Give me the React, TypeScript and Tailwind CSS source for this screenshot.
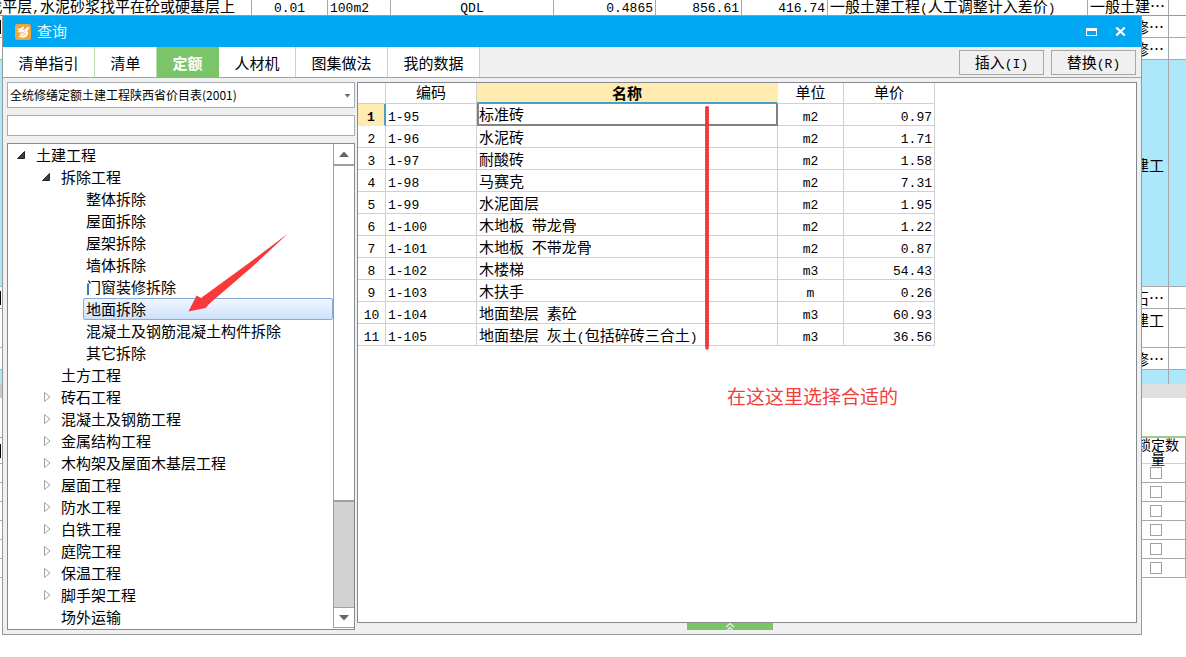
import { useState } from 'react';

const treeItems = [
  { label: '土建工程', level: 0, state: 'open' },
  { label: '拆除工程', level: 1, state: 'open' },
  { label: '整体拆除', level: 2, state: 'leaf' },
  { label: '屋面拆除', level: 2, state: 'leaf' },
  { label: '屋架拆除', level: 2, state: 'leaf' },
  { label: '墙体拆除', level: 2, state: 'leaf' },
  { label: '门窗装修拆除', level: 2, state: 'leaf' },
  { label: '地面拆除', level: 2, state: 'leaf' },
  { label: '混凝土及钢筋混凝土构件拆除', level: 2, state: 'leaf' },
  { label: '其它拆除', level: 2, state: 'leaf' },
  { label: '土方工程', level: 1, state: 'leaf' },
  { label: '砖石工程', level: 1, state: 'closed' },
  { label: '混凝土及钢筋工程', level: 1, state: 'closed' },
  { label: '金属结构工程', level: 1, state: 'closed' },
  { label: '木构架及屋面木基层工程', level: 1, state: 'closed' },
  { label: '屋面工程', level: 1, state: 'closed' },
  { label: '防水工程', level: 1, state: 'closed' },
  { label: '白铁工程', level: 1, state: 'closed' },
  { label: '庭院工程', level: 1, state: 'closed' },
  { label: '保温工程', level: 1, state: 'closed' },
  { label: '脚手架工程', level: 1, state: 'closed' },
  { label: '场外运输', level: 1, state: 'leaf' },
];

const rows = [
  { code: '1-95', name: '标准砖', unit: 'm2', price: '0.97' },
  { code: '1-96', name: '水泥砖', unit: 'm2', price: '1.71' },
  { code: '1-97', name: '耐酸砖', unit: 'm2', price: '1.58' },
  { code: '1-98', name: '马赛克', unit: 'm2', price: '7.31' },
  { code: '1-99', name: '水泥面层', unit: 'm2', price: '1.95' },
  { code: '1-100', name: '木地板 带龙骨', unit: 'm2', price: '1.22' },
  { code: '1-101', name: '木地板 不带龙骨', unit: 'm2', price: '0.87' },
  { code: '1-102', name: '木楼梯', unit: 'm3', price: '54.43' },
  { code: '1-103', name: '木扶手', unit: 'm', price: '0.26' },
  { code: '1-104', name: '地面垫层 素砼', unit: 'm3', price: '60.93' },
  { code: '1-105', name: '地面垫层 灰土(包括碎砖三合土)', unit: 'm3', price: '36.56' },
];

const tabs = [
  { label: '清单指引', width: 'w-[92px]' },
  { label: '清单', width: 'w-[62px]' },
  { label: '定额', width: 'w-[62px]' },
  { label: '人材机', width: 'w-[77px]' },
  { label: '图集做法', width: 'w-[92px]' },
  { label: '我的数据', width: 'w-[92px]' },
];

const indents = ['pl-[7px]', 'pl-8', 'pl-[57px]'];

// latin runs are set in the mono face, a bit smaller than the chinese text
function Mixed({ text }: { text: string }) {
  return (
    <>
      {text.split(/([\x20-\x7e]+)/).map((part, i) =>
        i % 2 ? (
          <span key={i} className="font-['Liberation_Mono',monospace] text-[13px] leading-none whitespace-pre">{part}</span>
        ) : (
          part
        )
      )}
    </>
  );
}

function Twisty({ state }: { state: string }) {
  return (
    <svg width="12" height="12" viewBox="0 0 12 12" className="shrink-0">
      {state === 'open' && <path d="M9.5 2.5v7h-7z" fill="#404040" stroke="#262626" />}
      {state === 'closed' && <path d="M4.5 1.5v9l5.500-4.500z" fill="#fff" stroke="#a0a0a0" />}
    </svg>
  );
}

function SheetTop() {
  const cell = 'flex items-end overflow-hidden shrink-0 border-r border-[#a8a8a8] px-0.5';
  return (
    <div className="flex h-4 border-b border-[#9a9a9a] overflow-hidden leading-[18px] whitespace-nowrap">
      <div className={`${cell} w-[252px] justify-end`}>
        <span className="pr-3.5"><Mixed text="找平层,水泥砂浆找平在砼或硬基层上" /></span>
      </div>
      <div className={`${cell} w-[76px] justify-center`}><span><Mixed text="0.01" /></span></div>
      <div className={`${cell} w-[63px]`}><span><Mixed text="100m2" /></span></div>
      <div className={`${cell} w-[163px] justify-center`}><span><Mixed text="QDL" /></span></div>
      <div className={`${cell} w-[102px] justify-end`}><span><Mixed text="0.4865" /></span></div>
      <div className={`${cell} w-[86px] justify-end`}><span><Mixed text="856.61" /></span></div>
      <div className={`${cell} w-[86px] justify-end`}><span><Mixed text="416.74" /></span></div>
      <div className={`${cell} w-[260px]`}><span><Mixed text="一般土建工程(人工调整计入差价)" /></span></div>
      <div className={`${cell} w-[81px]`}>一般土建…</div>
    </div>
  );
}

function SheetLeft() {
  return (
    <div className="w-0.5 shrink-0 overflow-hidden">
      <div className="flex h-[22px] items-center border-b border-[#a8a8a8]"><i className="h-3.5 w-px bg-black" /></div>
      <div className="h-[22px] border-b border-[#a8a8a8]" />
      <div className="h-[227px] border-b border-[#a8a8a8] bg-[#ace8fa]" />
      <div className="flex h-[22px] items-center border-b border-[#a8a8a8]"><i className="h-3.5 w-px bg-black" /></div>
      <div className="h-[39px] border-b border-[#a8a8a8]" />
      <div className="h-[22px] border-b border-[#a8a8a8]" />
      <div className="h-3.5 bg-[#ace8fa]" />
      <div className="h-3.5 bg-[#c8c8c8]" />
      <div className="h-10 border-b border-[#8db583]" />
      <div className="flex h-[26px] items-center border-b border-[#a8a8a8]"><i className="h-3.5 w-px bg-black" /></div>
      {[1, 2, 3, 4, 5, 6].map(n => (
        <div key={n} className="h-[19px] border-b border-[#a8a8a8]" />
      ))}
    </div>
  );
}

function SheetRight() {
  const row = 'flex border-b border-[#a8a8a8]';
  const cell = 'flex w-[27px] shrink-0 items-center justify-end overflow-hidden border-r border-[#a8a8a8] pr-1 whitespace-nowrap';
  return (
    <div className="w-11 shrink-0">
      <div className={`${row} h-[22px]`}><div className={cell}>修…</div></div>
      <div className={`${row} h-[22px]`}><div className={cell}>修…</div></div>
      <div className={`${row} h-[227px] bg-[#ace8fa]`}>
        <div className={`${cell} pb-4`}>建工</div>
      </div>
      <div className={`${row} h-[22px]`}><div className={cell}>石…</div></div>
      <div className={`${row} h-[39px]`}>
        <div className={`${cell} pb-4`}>建工</div>
      </div>
      <div className={`${row} h-[22px]`}><div className={cell}>修…</div></div>
      <div className="flex h-3.5 bg-[#ace8fa]"><div className={cell} /></div>
      <div className="h-3.5 bg-[#e0e0e0]" />
      <div className="h-10 border-b-2 border-[#9ccb8c]" />
      <div className="border-r border-[#a8a8a8]">
        <div className="flex h-[26px] items-center justify-end overflow-x-clip border-b border-[#d0d0d0] pr-1.5">
          <div className="w-[42px] shrink-0 text-center text-[14px] leading-[14px]">锁定数量</div>
        </div>
        {[1, 2, 3, 4, 5, 6].map(n => (
          <div key={n} className="flex h-[19px] items-center border-b border-[#a8a8a8] pl-2">
            <input type="checkbox" aria-label={`锁定数量 ${n}`} className="size-3 appearance-none border border-[#a0a0a0] bg-white" />
          </div>
        ))}
      </div>
    </div>
  );
}

function TitleBar() {
  return (
    <header className="flex h-[31px] items-center bg-[#00a8f3] pr-1.5 pl-3">
      <svg width="16" height="16" viewBox="0 0 16 16">
        <rect width="16" height="16" rx="2.5" fill="#f2a53c" />
        <path d="M2 4.500C4 5 6.500 4.500 8.500 2C9.500 4 8.500 5.500 7 6.300L10 5.500L13 2.500L14 4.500L12 7C14 8.500 13.500 11 11 12.800C8.500 14.300 5 13.800 3.500 12L6 11.800L4.500 10.500L8.500 7.800C6 8.800 4 8.800 2.500 7.800L4.500 6.800C3.500 6.300 2.500 5.500 2 4.500z" fill="#fff" />
        <path d="M6.500 10.500L10.500 7.200M7.500 12L11 9.500" stroke="#f2a53c" strokeWidth="0.900" />
      </svg>
      <h1 className="ml-1.5 flex-1 pb-0.5 text-[15px] text-[#e8faff]">查询</h1>
      <button aria-label="最大化" className="flex h-6 w-[29px] items-center justify-center">
        <svg width="11" height="8" viewBox="0 0 11 8">
          <path d="M0 0h11v8H0z M1 3v4h9V3z" fill="#fff" fillRule="evenodd" />
        </svg>
      </button>
      <button aria-label="关闭" className="flex h-6 w-[29px] items-center justify-center">
        <svg width="11" height="9" viewBox="0 0 11 9">
          <path d="M1.200 0.500l8.600 8M9.800 0.500l-8.600 8" stroke="#fff" strokeWidth="2.200" />
        </svg>
      </button>
    </header>
  );
}

export default function App() {
  const [tab, setTab] = useState('定额');
  const [selected, setSelected] = useState('地面拆除');
  const [keyword, setKeyword] = useState('');

  const th = 'h-[21px] border-r border-b border-[#d0d0d0] px-0 pt-0 pb-0.5 font-normal';
  const td = 'h-[22px] border-r border-b border-[#d0d0d0] py-0';

  return (
    <div className="min-h-screen bg-white font-['Noto_Sans_CJK_SC',sans-serif] text-[15px] leading-5 text-black">
      <SheetTop />
      <div className="flex items-start">
        <SheetLeft />
        <main className="min-w-0 flex-1 border-x border-b border-[#999] bg-[#f0f0f0]">
          <TitleBar />

          {/* Tabs and actions */}
          <div className="flex h-[31px] items-stretch border-b border-[#8db583]">
            {tabs.map(t => (
              <button
                key={t.label}
                onClick={() => setTab(t.label)}
                className={`${t.width} border-r pt-0.5 whitespace-nowrap ${
                  tab === t.label ? 'border-[#7cc46a] bg-[#7cc46a] font-bold text-white' : 'border-[#b9dfae] bg-white'
                }`}
              >
                {t.label}
              </button>
            ))}
            <div className="flex flex-1 items-center justify-end gap-[7px] pr-[5px]">
              <button className="h-[25px] w-[85px] border border-[#a8a8a8]"><Mixed text="插入(I)" /></button>
              <button className="h-[25px] w-[85px] border border-[#a8a8a8]"><Mixed text="替换(R)" /></button>
            </div>
          </div>

          <div className="flex gap-0.5 p-1">
            {/* Chapter tree */}
            <aside className="flex w-[348px] shrink-0 flex-col gap-[7px]">
              <div className="relative">
                <select aria-label="定额库" className="block h-[26px] w-full appearance-none border border-[#a5acb5] bg-white pl-0.5 text-[12px]">
                  <option>全统修缮定额土建工程陕西省价目表(2001)</option>
                </select>
                <svg width="7" height="4" viewBox="0 0 7 4" className="pointer-events-none absolute top-3 right-1">
                  <path d="M0.500 0h6l-3 3.500z" fill="#707070" />
                </svg>
              </div>
              <input
                aria-label="搜索"
                value={keyword}
                onChange={e => setKeyword(e.target.value)}
                className="h-[21px] border border-[#a5acb5] bg-white px-1 text-[12px] outline-none"
              />
              <div className="relative flex border border-[#858a90] bg-white pb-px">
                <ul className="min-w-0 flex-1">
                  {treeItems.map(item => (
                    <li key={item.label} className={`flex h-[22px] items-center ${indents[item.level]}`}>
                      <Twisty state={item.state} />
                      <button
                        onClick={() => setSelected(item.label)}
                        className={`ml-1.5 h-[22px] flex-1 rounded-xs border pb-0.5 pl-0.5 text-left whitespace-nowrap ${
                          selected === item.label ? 'border-[#84acdd] bg-linear-to-b from-[#f0f6fe] to-[#cfe2fb]' : 'border-transparent'
                        }`}
                      >
                        {item.label}
                      </button>
                    </li>
                  ))}
                </ul>
                <div className="flex w-[21px] flex-col border-l border-[#a0a0a0] bg-[#d2d2d2]">
                  <button aria-label="向上" className="flex h-[22px] items-center justify-center border-b-2 border-[#a0a0a0] bg-white">
                    <svg width="10" height="6" viewBox="0 0 10 6"><path d="M0 6l5-5.500l5 5.500z" fill="#666" /></svg>
                  </button>
                  <div className="h-[336px] border-b-2 border-[#a0a0a0] bg-white" />
                  <div className="flex-1" />
                  <button aria-label="向下" className="flex h-[21px] items-center justify-center border-y border-[#a0a0a0] bg-white">
                    <svg width="10" height="6" viewBox="0 0 10 6"><path d="M0 0l5 5.500l5-5.500z" fill="#666" /></svg>
                  </button>
                </div>
                <svg width="102" height="80" viewBox="0 0 102 80" className="pointer-events-none absolute top-[89px] left-[180px]">
                  <path d="M0.500 78.500L8.500 62.500L13 65L61 30L100 0.500L64 34L21 71L17.500 75z" fill="#f9383a" />
                </svg>
              </div>
            </aside>

            {/* Items */}
            <section className="flex min-w-0 flex-1 flex-col">
              <div className="relative flex-1 border border-[#858a90] bg-white">
                <table className="w-[577px] table-fixed border-separate border-spacing-0 leading-[18px]">
                  <thead>
                    <tr>
                      <th className={`${th} w-7`} />
                      <th className={`${th} w-[91px]`}>编码</th>
                      <th className="h-[21px] w-[301px] border-r border-b-2 border-r-[#ffebb0] border-b-[#479fc4] bg-[#ffebb0] p-0 font-bold">名称</th>
                      <th className={`${th} w-[66px]`}>单位</th>
                      <th className={`${th} w-[91px]`}>单价</th>
                    </tr>
                  </thead>
                  <tbody>
                    {rows.map((r, i) => (
                      <tr key={r.code}>
                        <th
                          className={
                            i === 0
                              ? 'h-[22px] border-r-2 border-b border-r-[#479fc4] border-b-[#ffebb0] bg-[#ffebb0] p-0 font-bold'
                              : `${td} px-0 font-normal`
                          }
                        >
                          <Mixed text={String(i + 1)} />
                        </th>
                        <td className={`${td} pr-0 pl-0.5`}><Mixed text={r.code} /></td>
                        <td
                          className={
                            i === 0
                              ? 'h-[22px] border-2 border-t-0 border-[#808080] p-0 whitespace-nowrap'
                              : `${td} pr-0 pl-0.5 whitespace-nowrap`
                          }
                        >
                          <Mixed text={r.name} />
                        </td>
                        <td className={`${td} px-0 text-center`}><Mixed text={r.unit} /></td>
                        <td className={`${td} pr-0.5 pl-0 text-right`}><Mixed text={r.price} /></td>
                      </tr>
                    ))}
                  </tbody>
                </table>
                <svg width="4" height="244" viewBox="0 0 4 244" className="pointer-events-none absolute top-[23px] left-[347px]">
                  <path d="M2 2v240" stroke="#f9383a" strokeWidth="3.400" strokeLinecap="round" />
                  <path d="M2 2v240" stroke="#f0383a" strokeWidth="4" strokeDasharray="0 3" strokeLinecap="round" />
                </svg>
                <p className="absolute top-[301px] left-[369px] text-[19px] leading-6 text-[#f0403c]">在这这里选择合适的</p>
              </div>
              <button aria-label="展开" className="ml-[330px] flex h-[7px] w-[86px] items-center justify-center bg-[#7cc46a]">
                <svg width="10" height="7" viewBox="0 0 10 7">
                  <path d="M1 4l4-3.500l4 3.500M2.500 7l2.500-2.500l2.500 2.500" fill="none" stroke="#e4f5df" strokeWidth="1.300" />
                </svg>
              </button>
            </section>
          </div>
        </main>
        <SheetRight />
      </div>
    </div>
  );
}
